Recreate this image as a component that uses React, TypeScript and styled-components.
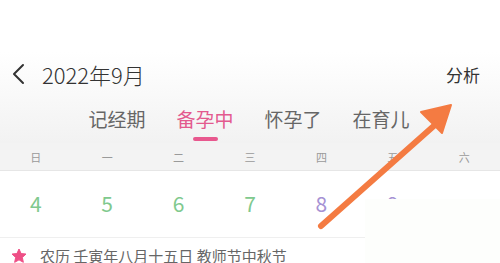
import React from 'react'
import styled, { createGlobalStyle } from 'styled-components'

const GlobalStyle = createGlobalStyle`
  html, body {
    margin: 0;
    padding: 0;
    background: #ffffff;
  }
  body {
    font-family: "Noto Sans CJK SC", "Noto Sans", sans-serif;
  }
`

const Page = styled.div`
  position: relative;
  width: 500px;
  height: 263px;
  overflow: hidden;
  background: #ffffff;
`

const Header = styled.div`
  height: 143px;
  padding-top: 52px;
  box-sizing: border-box;
  background: linear-gradient(180deg, #ffffff 0px, #ffffff 52px, #f2f2f2 143px);
`

const TitleRow = styled.div`
  display: flex;
  align-items: center;
  height: 44px;
  padding: 0 20px 0 10px;
`

const BackButton = styled.div`
  display: flex;
  align-items: center;
  width: 32px;
`

const MonthTitle = styled.div`
  flex: 1;
  font-size: 22px;
  font-weight: 300;
  color: #333333;
`

const Analyze = styled.div`
  font-size: 17px;
  color: #333333;
`

const Tabs = styled.div`
  display: flex;
  justify-content: center;
  gap: 31px;
  margin-top: 4px;
  padding-right: 2px;
`

const Tab = styled.div<{ $active?: boolean }>`
  position: relative;
  font-size: 19px;
  line-height: 38px;
  height: 44px;
  color: ${p => (p.$active ? '#e35a8e' : '#666666')};
`

const Underline = styled.div`
  position: absolute;
  left: 50%;
  bottom: 3px;
  width: 25px;
  height: 4px;
  margin-left: -12px;
  border-radius: 2px;
  background: #e8588e;
`

const Grid = styled.div`
  display: grid;
  grid-template-columns: repeat(7, 1fr);
`

const WeekRow = styled(Grid)`
  height: 27px;
  background: #f3f3f3;
  border-bottom: 1px solid #e6e6e6;
`

const WeekDay = styled.div`
  display: flex;
  align-items: center;
  justify-content: center;
  font-size: 11px;
  color: #9a9a9a;
`

const DayRow = styled(Grid)`
  height: 66px;
  border-bottom: 1px solid #efefef;
`

const Day = styled.div<{ $tone: 'green' | 'purple' }>`
  display: flex;
  align-items: center;
  justify-content: center;
  padding-bottom: 2px;
  font-size: 21px;
  color: ${p => (p.$tone === 'green' ? '#80c98e' : '#a692d4')};
`

const InfoRow = styled.div`
  display: flex;
  align-items: center;
  height: 36px;
  padding-left: 11px;
  gap: 13px;
`

const InfoText = styled.div`
  font-size: 15px;
  line-height: 20px;
  color: #666666;
`

const Patch = styled.div`
  position: absolute;
  left: 365px;
  top: 199px;
  width: 135px;
  height: 64px;
  background: #fdfefc;
`

const Arrow = styled.svg`
  position: absolute;
  left: 0;
  top: 0;
  pointer-events: none;
`

const weekDays = ['日', '一', '二', '三', '四', '五', '六']
const days: { n: string; tone: 'green' | 'purple' }[] = [
  { n: '4', tone: 'green' },
  { n: '5', tone: 'green' },
  { n: '6', tone: 'green' },
  { n: '7', tone: 'green' },
  { n: '8', tone: 'purple' },
  { n: '9', tone: 'purple' },
  { n: '', tone: 'purple' },
]

const tabs = ['记经期', '备孕中', '怀孕了', '在育儿']

function App() {
  return (
    <Page>
      <GlobalStyle />
      <Header>
        <TitleRow>
          <BackButton>
            <svg width="16" height="22" viewBox="0 0 16 22">
              <path d="M13 2 L4 11 L13 20" fill="none" stroke="#333" strokeWidth="2" strokeLinecap="round" strokeLinejoin="round" />
            </svg>
          </BackButton>
          <MonthTitle>2022年9月</MonthTitle>
          <Analyze>分析</Analyze>
        </TitleRow>
        <Tabs>
          {tabs.map(t => (
            <Tab key={t} $active={t === '备孕中'}>
              {t}
              {t === '备孕中' && <Underline />}
            </Tab>
          ))}
        </Tabs>
      </Header>

      <WeekRow>
        {weekDays.map(d => (
          <WeekDay key={d}>{d}</WeekDay>
        ))}
      </WeekRow>

      <DayRow>
        {days.map((d, i) => (
          <Day key={i} $tone={d.tone}>{d.n}</Day>
        ))}
      </DayRow>

      <InfoRow>
        <svg width="16" height="16" viewBox="0 0 24 24">
          <path d="M12 1.5 L15.1 8.3 L22.5 9.1 L17 14.1 L18.5 21.5 L12 17.8 L5.5 21.5 L7 14.1 L1.5 9.1 L8.9 8.3 Z" fill="#ee4f86" stroke="#ee4f86" strokeWidth="1.5" strokeLinejoin="round" />
        </svg>
        <InfoText>农历 壬寅年八月十五日 教师节中秋节</InfoText>
      </InfoRow>

      <Patch />

      <Arrow width="500" height="263" viewBox="0 0 500 263">
        <line x1="321" y1="226" x2="436" y2="124" stroke="#f47b42" strokeWidth="6" strokeLinecap="round" />
        <path d="M451 105 L421 112 L442 133 Z" fill="#f47b42" stroke="#f47b42" strokeWidth="2" strokeLinejoin="round" />
      </Arrow>
    </Page>
  )
}

export default App
